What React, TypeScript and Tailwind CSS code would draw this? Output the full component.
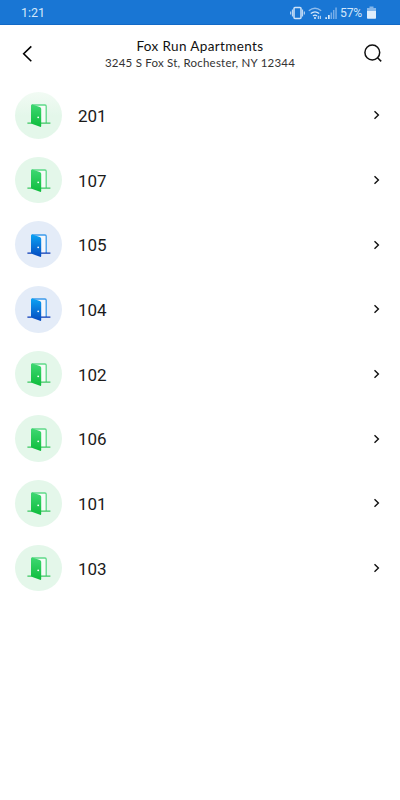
import React from "react";

type Tone = "green" | "blue";

const UNITS: { label: string; tone: Tone }[] = [
  { label: "201", tone: "green" },
  { label: "107", tone: "green" },
  { label: "105", tone: "blue" },
  { label: "104", tone: "blue" },
  { label: "102", tone: "green" },
  { label: "106", tone: "green" },
  { label: "101", tone: "green" },
  { label: "103", tone: "green" },
];

const PALETTE = {
  green: { top: "#3fd873", bottom: "#0cbb3a", line: "#3cc763", frame: "#5fd989" },
  blue: { top: "#0aa5f5", bottom: "#0546bd", line: "#0a3bb5", frame: "#3d9bea" },
};

function DoorIcon({ tone, id }: { tone: Tone; id: string }) {
  const c = PALETTE[tone];
  return (
    <svg className="mt-[2px]" width="24" height="24" viewBox="0 0 24 24" fill="none">
      <defs>
        <linearGradient id={id} x1="0" y1="0" x2="0" y2="24" gradientUnits="userSpaceOnUse">
          <stop offset="0" stopColor={c.top} />
          <stop offset="1" stopColor={c.bottom} />
        </linearGradient>
      </defs>
      <path d="M5 1H19V19H13.5V4L5 1Z" fill="#fff" fillOpacity="0.6" />
      <path d="M5 1H18Q19.2 1 19.2 2.2V19" stroke={c.frame} strokeWidth="1.3" />
      <path d="M0.4 19.1H4.5M14 19.1H23.4" stroke={c.line} strokeWidth="1.2" />
      <path
        d="M4 1.6Q4 .3 5.3 .6L12.8 2.9Q14.2 3.4 14.2 4.8V21.9Q14.2 23.2 13 22.8L4 19.6Z"
        fill={`url(#${id})`}
      />
      <circle cx="11.2" cy="13.3" r="0.9" fill="#fff" />
    </svg>
  );
}

function StatusBar() {
  return (
    <div className="flex h-[25px] items-center justify-between border-b border-[#1269c6] bg-[#1976d4] pr-[24px] pl-[21px] text-[12.5px] leading-none text-[#d3e6fa]">
      <span className="pt-[3px]">1:21</span>
      <div className="flex items-center pt-px">
        <svg width="15" height="14" viewBox="0 0 15 14" fill="none" stroke="#cfe3f8">
          <rect x="4" y="1.5" width="7" height="11" rx="1" strokeWidth="1.5" />
          <path d="M2.4 3.5V10.5M12.6 3.5V10.5M.7 5.5V8.5M14.3 5.5V8.5" strokeWidth="1" />
        </svg>
        <svg className="ml-[3px]" width="15" height="14" viewBox="0 0 15 14" fill="none">
          <path d="M.8 4.8Q7 -.3 13.2 4.8" stroke="#8fbcec" strokeWidth="1.3" />
          <path d="M2.8 7.6Q7 4 11.2 7.6M5 10Q7 8.2 9 10" stroke="#d5e7fa" strokeWidth="1.3" />
          <circle cx="7" cy="12" r="1.1" fill="#d5e7fa" />
          <path d="M10.3 13V9.8M12.3 13V9.8" stroke="#d5e7fa" />
        </svg>
        <svg className="ml-[2px]" width="12" height="14" viewBox="0 0 12 14">
          <path d="M.3 13V11.2H2V13ZM3 13V9H4.7V13Z" fill="#d5e7fa" />
          <path d="M5.6 13V6.5H7.1V13ZM8 13V4H9.4V13ZM10.3 13V1.5H11.8V13Z" fill="#78aee8" />
        </svg>
        <span className="ml-[3px] w-[24px] pt-px text-[12.2px] tracking-[-0.2px]">57%</span>
        <svg className="ml-[3px]" width="9" height="13" viewBox="0 0 9 13">
          <path d="M2.5 .5H6.5V2H9V5H0V2H2.5Z" fill="#86b7ea" />
          <path d="M0 5H9V12Q9 12.7 8.3 12.7H.7Q0 12.7 0 12Z" fill="#dfedfb" />
        </svg>
      </div>
    </div>
  );
}

function Header() {
  return (
    <header className="flex h-[58px] items-start justify-between">
      <svg className="mt-[20px] ml-[22px]" width="11" height="18" viewBox="0 0 11 18" fill="none">
        <path d="M9.3 1.4L1.7 8.8L9.3 16.2" stroke="#000" strokeWidth="1.6" />
      </svg>
      <div className="flex flex-col items-center pt-[12px] pl-[3px] font-['Lato','Noto_Sans',sans-serif] text-[#111]">
        <h1 className="text-[13.5px] leading-[18px] font-normal tracking-[0.38px] whitespace-nowrap">Fox Run Apartments</h1>
        <p className="text-[11.5px] leading-[16px] font-normal tracking-[0.21px] whitespace-nowrap text-[#333]">3245 S Fox St, Rochester, NY 12344</p>
      </div>
      <svg className="mt-[19px] mr-[17px]" width="19" height="19" viewBox="0 0 19 19" fill="none" stroke="#111" strokeWidth="1.5">
        <circle cx="8.3" cy="8.5" r="7.4" />
        <path d="M13.6 13.8L17.2 17.4" />
      </svg>
    </header>
  );
}

export default function App() {
  return (
    <main className="h-[800px] w-[400px] overflow-hidden bg-white font-['Roboto',sans-serif]">
      <StatusBar />
      <Header />
      <ul>
        {UNITS.map((u, i) => (
          <li key={u.label} className="flex h-[64.7px] items-center pr-[20px] pl-[15.4px]">
            <div
              className={`flex size-[46.6px] items-center justify-center rounded-full ${
                u.tone === "blue" ? "bg-[#e4ecf8]" : i === 0 ? "bg-linear-to-b from-[#f2fbf4] to-[#e4f7ea] to-50%" : "bg-[#e4f7ea]"
              }`}
            >
              <DoorIcon tone={u.tone} id={`door-${u.label}`} />
            </div>
            <span className="ml-[16px] pt-px text-[17px] leading-[24px] text-[#1a1a1a]">{u.label}</span>
            <svg className="ml-auto" width="7" height="10" viewBox="0 0 7 10" fill="none">
              <path d="M1.5 1.2L5.4 5L1.5 8.8" stroke="#111" strokeWidth="1.4" />
            </svg>
          </li>
        ))}
      </ul>
    </main>
  );
}
